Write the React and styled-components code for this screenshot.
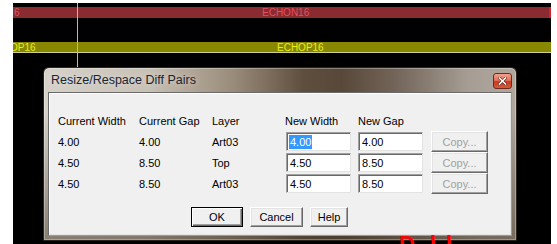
import React from 'react'
import styled, { createGlobalStyle } from 'styled-components'

const GlobalStyle = createGlobalStyle`
  html, body {
    margin: 0;
    padding: 0;
    background: #fff;
    overflow: hidden;
  }
`

const Canvas = styled.div`
  position: relative;
  width: 538px;
  height: 241px;
  margin: 3px 0 0 13px;
  background: #000;
  overflow: hidden;
  display: flex;
  flex-direction: column;
  font-family: 'Liberation Sans', Arial, sans-serif;
`

const Band = styled.div`
  display: flex;
  align-items: center;
  height: ${p => p.$height}px;
  margin-top: ${p => p.$top}px;
  background: ${p => p.$bg};
  color: ${p => p.$fg};
  font-size: 10px;
  white-space: nowrap;
  border-bottom: ${p => (p.$line ? `1px solid ${p.$line}` : 'none')};
  border-right: ${p => (p.$tip ? `2px solid ${p.$tip}` : 'none')};
`

const BandTag = styled.span`
  width: ${p => p.$width}px;
  margin-left: ${p => p.$shift}px;
  flex: none;
`

const NetName = styled.span`
  margin-left: ${p => p.$offset}px;
`

const GuideLine = styled.div`
  position: absolute;
  left: 64px;
  top: 0;
  width: 1px;
  height: 64px;
  background: #b8b8b8;
  z-index: 1;
`

const Dialog = styled.div`
  position: relative;
  z-index: 2;
  box-sizing: border-box;
  width: 474px;
  height: 174px;
  margin: 14px 0 0 30px;
  border: 1px solid #2a241c;
  border-radius: 6px 6px 0 0;
  display: flex;
  flex-direction: column;
  background:
    linear-gradient(180deg, rgba(0, 0, 0, 0) 0%, rgba(0, 0, 0, 0) 25%, rgba(70, 55, 38, 0.55) 100%),
    linear-gradient(90deg, #d6d2ca 0%, #c8c1b6 22%, #9a8c7a 40%, #5e4e3e 55%, #574839 63%, #74665a 75%, #a69e94 90%, #b0a89e 100%);
  box-shadow: inset 0 0 0 1px rgba(255, 255, 255, 0.3);
`

const TitleBar = styled.div`
  height: 24px;
  flex: none;
  display: flex;
  justify-content: space-between;
  padding: 0 4px 0 7px;
`

const Title = styled.span`
  align-self: center;
  font-size: 12.5px;
  color: #1c2430;
  text-shadow: 0 0 6px rgba(255, 255, 255, 0.55);
`

const CloseButton = styled.div`
  box-sizing: border-box;
  width: 19px;
  height: 16px;
  margin-top: 5px;
  border: 1px solid #6e2a1c;
  border-radius: 3px;
  background: linear-gradient(180deg, #f2a28e 0%, #e2705a 45%, #c8391e 55%, #d65a3c 100%);
  display: flex;
  align-items: center;
  justify-content: center;
`

const Client = styled.div`
  flex: 1;
  margin: 0 4px 4px 4px;
  background: #f0f0f0;
  border: 1px solid;
  border-color: #6a6a6a #9a9a9a #9a9a9a #6a6a6a;
  box-shadow: inset 1px 1px 0 #ffffff, inset -1px -1px 0 #e4e4e4;
  padding: 17px 0 0 9px;
  font-size: 11px;
  color: #000;
`

const Table = styled.div`
  display: grid;
  grid-template-columns: 81px 73px 73px 73px 73px 57px;
  grid-auto-rows: 21px;
  align-items: center;
`

const Cell = styled.span`
  white-space: nowrap;
`

const Field = styled.div`
  box-sizing: border-box;
  width: 65px;
  height: 19px;
  margin-left: ${p => p.$shift || 0}px;
  background: #fff;
  border: 1px solid;
  border-color: #a0a0a0 #e3e3e3 #e3e3e3 #a0a0a0;
  box-shadow: inset 1px 1px 0 #696969;
  padding: 0 0 0 2px;
  display: flex;
  align-items: center;
`

const FieldText = styled.span`
  line-height: 14px;
  padding: 0 1px;
  background: ${p => (p.$selected ? '#3399ff' : 'transparent')};
  color: ${p => (p.$selected ? '#fff' : '#000')};
`

const Button = styled.div`
  box-sizing: border-box;
  width: ${p => p.$width}px;
  height: ${p => p.$height}px;
  display: flex;
  align-items: center;
  justify-content: center;
  background: #f0f0f0;
  border: 1px solid;
  border-color: ${p => (p.$default ? '#000' : '#fff #696969 #696969 #fff')};
  box-shadow: ${p =>
    p.$default
      ? 'inset 1px 1px 0 #fff, inset -1px -1px 0 #696969, inset -2px -2px 0 #a0a0a0'
      : 'inset -1px -1px 0 #a0a0a0, inset 1px 1px 0 #e3e3e3'};
  color: ${p => (p.$disabled ? '#a0a0a0' : '#000')};
  font-size: 11px;
`

const ButtonRow = styled.div`
  display: flex;
  gap: 7px;
  margin-top: 13px;
  padding-left: 133px;
`

const RedMark = styled.div`
  position: absolute;
  left: 386px;
  top: 230px;
  z-index: 3;
  display: flex;
  color: #ff0000;
  font-weight: bold;
  font-size: 22px;
  line-height: 22px;
`

const MarkLetter = styled.span`
  margin-left: ${p => p.$gap}px;
`

const rows = [
  { w: '4.00', g: '4.00', layer: 'Art03', nw: '4.00', ng: '4.00', selected: true },
  { w: '4.50', g: '8.50', layer: 'Top', nw: '4.50', ng: '8.50' },
  { w: '4.50', g: '8.50', layer: 'Art03', nw: '4.50', ng: '8.50' },
]

export default function App () {
  return (
    <>
      <GlobalStyle />
      <Canvas>
        <Band $top={4} $height={11} $bg="#8a2a31" $fg="#e4505c" $tip="#d8202c">
          <BandTag $width={0} $shift={1}>6</BandTag>
          <NetName $offset={248}>ECHON16</NetName>
        </Band>
        <Band $top={24} $height={10} $bg="#878700" $fg="#eeee10" $line="#cfcf9a">
          <BandTag $width={22} $shift={-3}>OP16</BandTag>
          <NetName $offset={245}>ECHOP16</NetName>
        </Band>
        <GuideLine />
        <Dialog>
          <TitleBar>
            <Title>Resize/Respace Diff Pairs</Title>
            <CloseButton>
              <svg width="9" height="8" viewBox="0 0 9 8">
                <path d="M1.5 1 L7.5 7 M7.5 1 L1.5 7" stroke="#5a1a10" strokeWidth="2.6" strokeLinecap="square" />
                <path d="M1.5 1 L7.5 7 M7.5 1 L1.5 7" stroke="#fff" strokeWidth="1.6" strokeLinecap="square" />
              </svg>
            </CloseButton>
          </TitleBar>
          <Client>
            <Table>
              <Cell>Current Width</Cell>
              <Cell>Current Gap</Cell>
              <Cell>Layer</Cell>
              <Cell>New Width</Cell>
              <Cell>New Gap</Cell>
              <Cell />
              {rows.map((r, i) => (
                <React.Fragment key={i}>
                  <Cell>{r.w}</Cell>
                  <Cell>{r.g}</Cell>
                  <Cell>{r.layer}</Cell>
                  <Field $shift={1}>
                    <FieldText $selected={r.selected}>{r.nw}</FieldText>
                  </Field>
                  <Field>
                    <FieldText>{r.ng}</FieldText>
                  </Field>
                  <Button $width={57} $height={21} $disabled>Copy...</Button>
                </React.Fragment>
              ))}
            </Table>
            <ButtonRow>
              <Button $width={52} $height={20} $default>OK</Button>
              <Button $width={53} $height={20}>Cancel</Button>
              <Button $width={38} $height={20}>Help</Button>
            </ButtonRow>
          </Client>
        </Dialog>
        <RedMark>
          <MarkLetter $gap={0}>D</MarkLetter>
          <MarkLetter $gap={15}>l</MarkLetter>
          <MarkLetter $gap={10}>l</MarkLetter>
        </RedMark>
      </Canvas>
    </>
  )
}
